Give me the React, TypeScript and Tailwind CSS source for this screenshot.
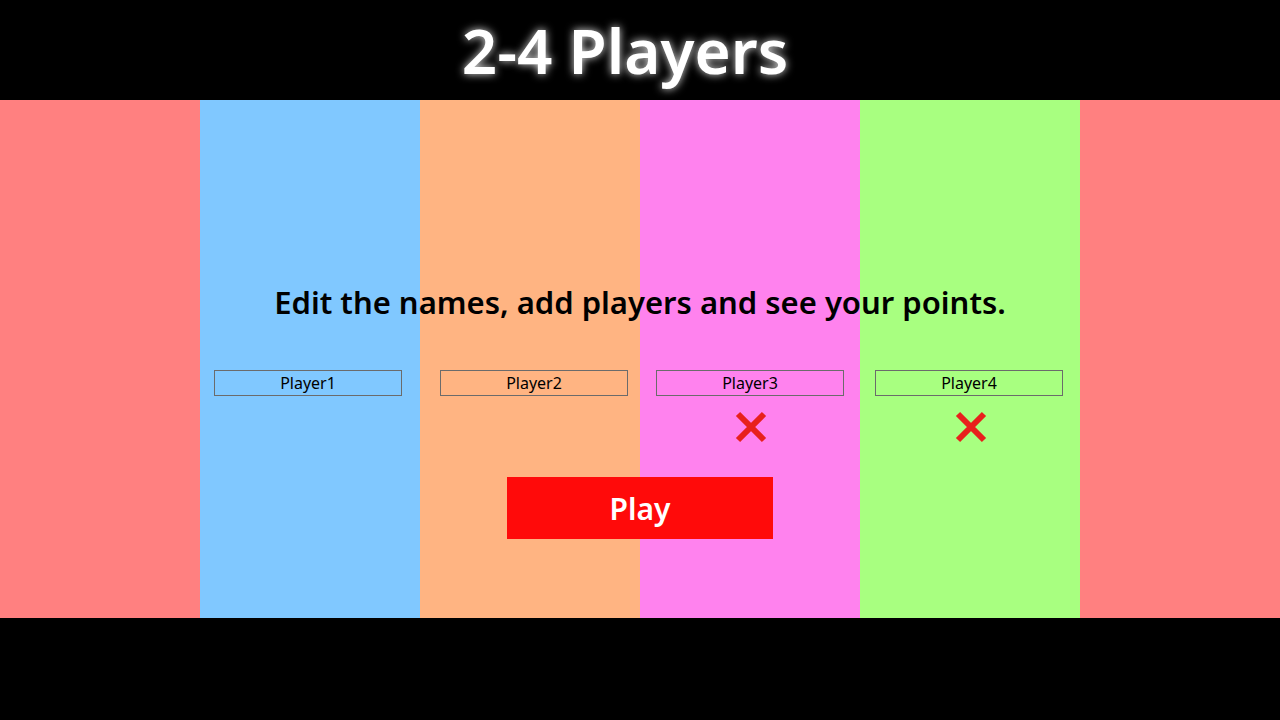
const columns = ['bg-[#ff8080]', 'bg-[#80c8ff]', 'bg-[#ffb482]', 'bg-[#ff82ee]', 'bg-[#a8ff80]', 'bg-[#ff8080]']

const players = [
  { name: 'Player1', removable: false, shift: 'mr-[4px]' },
  { name: 'Player2', removable: false, shift: 'ml-[8px]' },
  { name: 'Player3', removable: true, shift: '' },
  { name: 'Player4', removable: true, shift: 'mr-[2px]' },
]

function Cross() {
  return (
    <svg width="34" height="34" viewBox="0 0 34 34" className="translate-x-[1px]">
      <path d="M4 4 L30 30 M30 4 L4 30" stroke="#e8201c" strokeWidth="6" strokeLinecap="butt" />
    </svg>
  )
}

export default function App() {
  return (
    <div className="w-[1280px] h-[720px] bg-black flex flex-col font-['Noto_Sans',sans-serif]">
      <header className="h-[100px] flex items-center justify-center pr-[30px]">
        <h1 className="text-[62px] font-semibold text-white leading-none [text-shadow:0_0_8px_rgba(255,255,255,0.9)]">
          2-4 Players
        </h1>
      </header>

      <main className="h-[518px] grid">
        <div className="col-start-1 row-start-1 grid grid-cols-[200px_220px_220px_220px_220px_200px]">
          {columns.map((c, i) => (
            <div key={i} className={c} />
          ))}
        </div>

        <div className="col-start-1 row-start-1 flex flex-col items-center pt-[187px]">
          <p className="text-[31px] font-semibold text-black leading-none">
            Edit the names, add players and see your points.
          </p>

          <div className="mt-[52px] grid grid-cols-[200px_220px_220px_220px_220px_200px] w-full h-[72px]">
            <div />
            {players.map((p) => (
              <div key={p.name} className="flex flex-col items-center">
                <input
                  defaultValue={p.name}
                  className={`w-[188px] h-[26px] border border-[#6b6b6b] bg-transparent text-center text-[16px] text-black outline-none ${p.shift}`}
                />
                {p.removable && (
                  <button className="mt-[14px]">
                    <Cross />
                  </button>
                )}
              </div>
            ))}
            <div />
          </div>

          <button className="mt-[35px] w-[266px] h-[62px] bg-[#ff0a0a] text-white text-[30px] font-semibold">
            Play
          </button>
        </div>
      </main>
    </div>
  )
}
